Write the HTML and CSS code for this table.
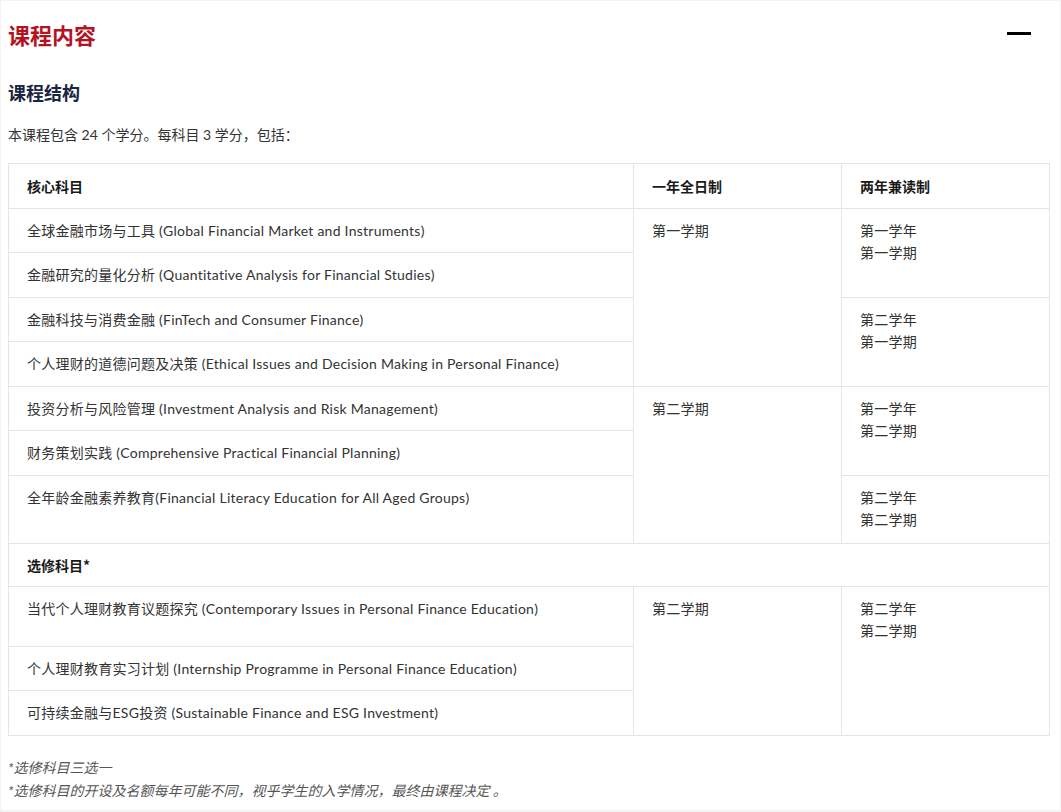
FILE: index.html
```html
<!DOCTYPE html>
<html lang="zh-CN">
<head>
<meta charset="utf-8">
<title>课程内容</title>
<link rel="stylesheet" href="styles.css">
</head>
<body>
<div class="panel">
  <div class="panel-head">
    <h1 class="title">课程内容</h1>
    <span class="collapse" aria-label="收起"></span>
  </div>
  <h2 class="subtitle">课程结构</h2>
  <p class="intro">本课程包含 24 个学分。每科目 3 学分，包括：</p>
  <table class="course-table">
    <colgroup>
      <col class="c1"><col class="c2"><col class="c3">
    </colgroup>
    <thead>
      <tr>
        <th>核心科目</th>
        <th>一年全日制</th>
        <th>两年兼读制</th>
      </tr>
    </thead>
    <tbody>
      <tr>
        <td>全球金融市场与工具 (Global Financial Market and Instruments)</td>
        <td rowspan="4">第一学期</td>
        <td rowspan="2">第一学年<br>第一学期</td>
      </tr>
      <tr>
        <td>金融研究的量化分析 (Quantitative Analysis for Financial Studies)</td>
      </tr>
      <tr>
        <td>金融科技与消费金融 (FinTech and Consumer Finance)</td>
        <td rowspan="2">第二学年<br>第一学期</td>
      </tr>
      <tr>
        <td>个人理财的道德问题及决策 (Ethical Issues and Decision Making in Personal Finance)</td>
      </tr>
      <tr>
        <td>投资分析与风险管理 (Investment Analysis and Risk Management)</td>
        <td rowspan="3">第二学期</td>
        <td rowspan="2">第一学年<br>第二学期</td>
      </tr>
      <tr>
        <td>财务策划实践 (Comprehensive Practical Financial Planning)</td>
      </tr>
      <tr class="row-68">
        <td>全年龄金融素养教育(Financial Literacy Education for All Aged Groups)</td>
        <td>第二学年<br>第二学期</td>
      </tr>
      <tr>
        <th colspan="3" class="group">选修科目*</th>
      </tr>
      <tr class="row-60">
        <td>当代个人理财教育议题探究 (Contemporary Issues in Personal Finance Education)</td>
        <td rowspan="3">第二学期</td>
        <td rowspan="3">第二学年<br>第二学期</td>
      </tr>
      <tr>
        <td>个人理财教育实习计划 (Internship Programme in Personal Finance Education)</td>
      </tr>
      <tr>
        <td>可持续金融与ESG投资 (Sustainable Finance and ESG Investment)</td>
      </tr>
    </tbody>
  </table>
  <div class="notes">
    <p>*选修科目三选一</p>
    <p>*选修科目的开设及名额每年可能不同，视乎学生的入学情况，最终由课程决定 。</p>
  </div>
</div>
</body>
</html>
```
FILE: styles.css
```css
html, body {
  margin: 0;
  padding: 0;
}
body {
  background: #f3f3f3;
  font-family: "Lato", "Noto Sans CJK SC", sans-serif;
  color: #333;
  font-size: 14px;
}
.panel {
  background: #fff;
  margin: 1px 1px 0 1px;
  height: 809px;
  box-sizing: border-box;
  padding: 18px 11px 0 7px;
}
.panel-head {
  display: flex;
  align-items: center;
  justify-content: space-between;
}
.title {
  margin: 0;
  font-family: "Noto Sans CJK SC", sans-serif;
  font-size: 22px;
  line-height: 30px;
  font-weight: 700;
  color: #b5121f;
}
.collapse {
  display: block;
  width: 24px;
  height: 2.5px;
  background: #000;
  margin-right: 18px;
  margin-top: -1px;
}
.subtitle {
  margin: 30px 0 0;
  font-family: "Noto Sans CJK SC", sans-serif;
  font-size: 18px;
  line-height: 26px;
  font-weight: 700;
  color: #1b2440;
}
.intro {
  margin: 19px 0 0;
  line-height: 22px;
  font-size: 14px;
  color: #333;
}
.course-table {
  margin-top: 17px;
  width: 1041px;
  table-layout: fixed;
  border-collapse: collapse;
  font-size: 14px;
  line-height: 22px;
  letter-spacing: 0.25px;
}
.c1 { width: 625px; }
.c2 { width: 208px; }
.c3 { width: 208px; }
.course-table th,
.course-table td {
  border: 1px solid #e2e5eb;
  padding: 11px 18px 10.5px;
  text-align: left;
  vertical-align: top;
}
.course-table th {
  font-family: "Noto Sans CJK SC", sans-serif;
  font-weight: 700;
  color: #1a1a1a;
  font-size: 14px;
  letter-spacing: 0;
}
.course-table th.group {
  padding-top: 10px;
  padding-bottom: 10px;
}
.course-table tr.row-68 {
  height: 68px;
}
.course-table tr.row-60 {
  height: 60px;
}
.notes {
  margin-top: 20px;
}
.notes p {
  margin: 0;
  font-style: italic;
  line-height: 23px;
  color: #555;
  font-size: 14px;
}
```
